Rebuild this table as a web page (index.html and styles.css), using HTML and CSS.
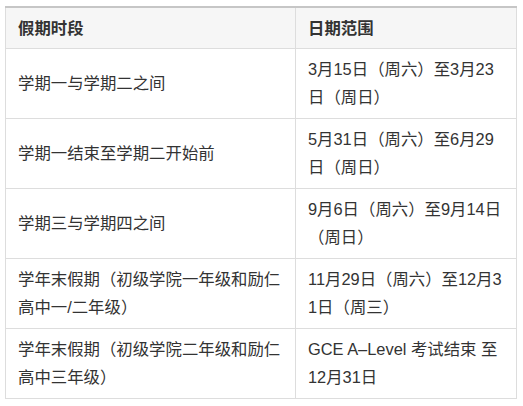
FILE: index.html
```html
<!DOCTYPE html>
<html lang="zh">
<head>
<meta charset="utf-8">
<link rel="stylesheet" href="styles.css">
</head>
<body>
<table class="holidays">
  <colgroup><col class="c1"><col class="c2"></colgroup>
  <thead>
    <tr><th>假期时段</th><th>日期范围</th></tr>
  </thead>
  <tbody>
    <tr><td>学期一与学期二之间</td><td>3月15日（周六）至3月23日（周日）</td></tr>
    <tr><td>学期一结束至学期二开始前</td><td>5月31日（周六）至6月29日（周日）</td></tr>
    <tr><td>学期三与学期四之间</td><td>9月6日（周六）至9月14日（周日）</td></tr>
    <tr><td>学年末假期（初级学院一年级和励仁高中一/二年级）</td><td>11月29日（周六）至12月31日（周三）</td></tr>
    <tr><td>学年末假期（初级学院二年级和励仁高中三年级）</td><td>GCE A–Level 考试结束 至12月31日</td></tr>
  </tbody>
</table>
</body>
</html>
```
FILE: styles.css
```css
html, body {
  background: #ffffff;
}
body {
  margin: 0;
  padding: 6px 0 0 5px;
  font-family: "Liberation Sans", "Noto Sans CJK SC", sans-serif;
  font-size: 16.4px;
  color: #333333;
}
.holidays {
  border-collapse: collapse;
  table-layout: fixed;
  width: 511px;
  border-top: 2px solid #c6c6c6;
}
.c1 { width: 290px; }
.c2 { width: 221px; }
.holidays th,
.holidays td {
  border: 1px solid #dddddd;
  padding: 6px 12px 7px 12px;
  line-height: 28px;
  text-align: left;
  vertical-align: middle;
  word-break: break-all;
}
.holidays thead th {
  border-top: 0;
  background: #f6f6f6;
  font-weight: bold;
  padding: 6px 12px 6px 12px;
}
```
